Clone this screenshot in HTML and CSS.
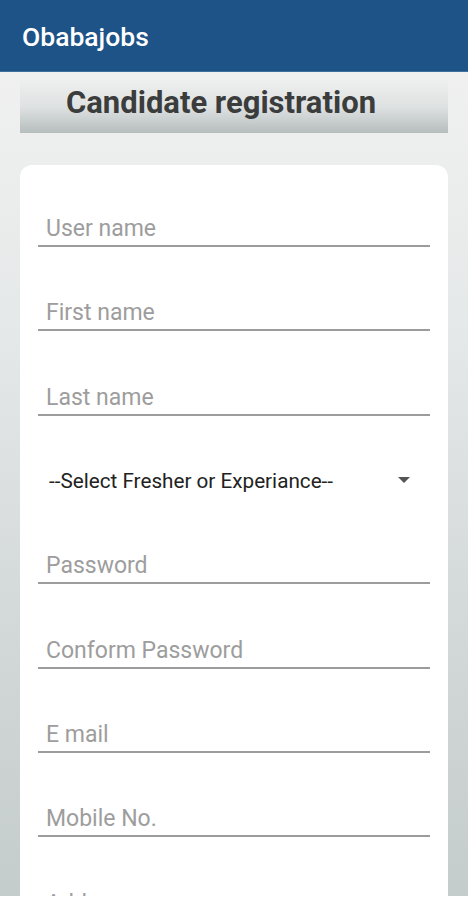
FILE: index.html
```html
<!DOCTYPE html>
<html>
<head>
<meta charset="utf-8">
<link rel="stylesheet" href="styles.css">
</head>
<body>
<header class="appbar"><span class="appbar-title">Obabajobs</span></header>
<main class="page">
  <div class="title-bar"><h1 class="title">Candidate registration</h1></div>
  <form class="card">
    <div class="field"><span class="ph">User name</span></div>
    <div class="field"><span class="ph">First name</span></div>
    <div class="field"><span class="ph">Last name</span></div>
    <div class="field select">
      <span class="sel-text">--Select Fresher or Experiance--</span>
      <svg class="caret" width="12" height="7" viewBox="0 0 12 7"><path d="M0 0 H12 L6 6 Z" fill="#555"/></svg>
    </div>
    <div class="field"><span class="ph">Password</span></div>
    <div class="field"><span class="ph">Conform Password</span></div>
    <div class="field"><span class="ph">E mail</span></div>
    <div class="field"><span class="ph">Mobile No.</span></div>
    <div class="field"><span class="ph">Address</span></div>
  </form>
</main>
</body>
</html>
```
FILE: styles.css
```css
html, body {
  margin: 0;
  padding: 0;
  height: 900px;
  overflow: hidden;
  font-family: Roboto, "Noto Sans", sans-serif;
}
body {
  background: #fff;
}
.appbar {
  height: 72px;
  background: #1e5387;
  border-bottom: 1px solid #3f6f9c;
  box-sizing: border-box;
  display: flex;
  align-items: center;
  padding-left: 22px;
}
.appbar-title {
  color: #fff;
  font-size: 26.5px;
  font-weight: 500;
  margin-top: 2px;
}
.page {
  height: 824px;
  overflow: hidden;
  background: linear-gradient(to bottom, #f0f0f0 0%, #e6e9e9 30%, #d6dbdb 60%, #c5cccc 100%);
  padding: 8px 20px 0;
  box-sizing: border-box;
}
.title-bar {
  height: 53px;
  background: linear-gradient(to bottom, #eeefef 0%, #dfe2e2 50%, #b6bdbd 100%);
  display: flex;
  align-items: center;
  justify-content: center;
}
.title {
  margin: 0 26px 9px 0;
  font-size: 31px;
  font-weight: 700;
  color: #3b3c3c;
}
.card {
  margin-top: 32px;
  background: #fff;
  border-radius: 12px 12px 0 0;
  padding: 46px 18px 0 18px;
  display: flex;
  flex-direction: column;
  gap: 48.33px;
  height: 800px;
}
.field {
  height: 36px;
  box-sizing: border-box;
  border-bottom: 2px solid #9c9c9c;
  padding: 0 8px 2px;
  display: flex;
  align-items: flex-end;
  flex-shrink: 0;
}
.ph {
  font-size: 23px;
  line-height: 28px;
  color: #9d9d9d;
  white-space: nowrap;
}
.field.select {
  border-bottom: none;
  padding: 0 20px 0 11px;
  justify-content: space-between;
  align-items: center;
}
.sel-text {
  font-size: 20.7px;
  color: #222;
  margin-top: -2px;
}
.caret {
  margin-top: -2px;
}
```
